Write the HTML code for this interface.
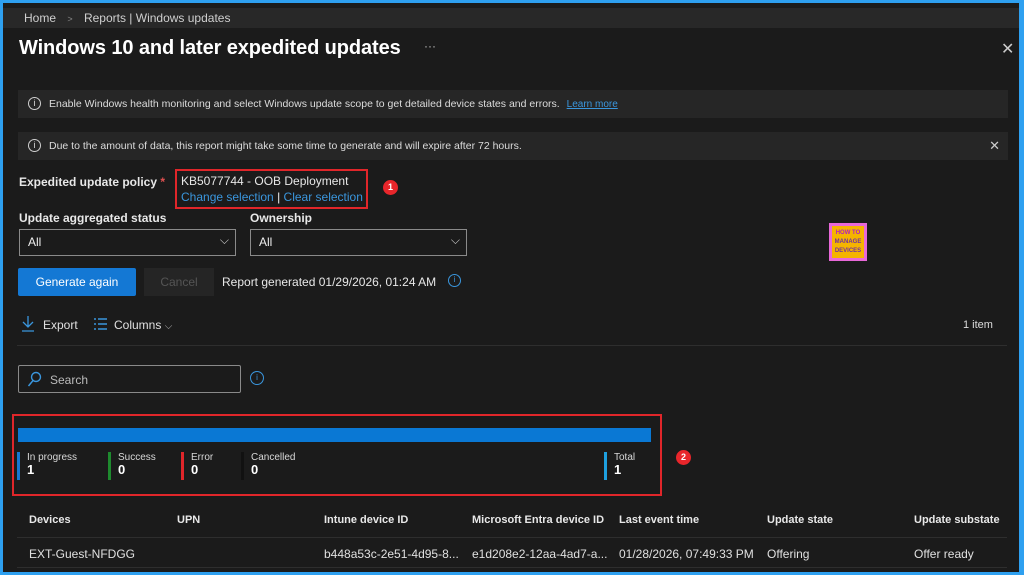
<!DOCTYPE html>
<html><head><style>
*{margin:0;padding:0;box-sizing:border-box}
body{width:1024px;height:575px;background:#2ea0f0;font-family:"Liberation Sans",sans-serif;color:#e6e6e6;overflow:hidden;position:relative}
#f{position:absolute;left:3px;top:3px;width:1016px;height:569px;background:#1b1b1b;overflow:hidden}
.a{position:absolute;white-space:nowrap}
.bar{position:absolute;left:15px;width:990px;height:28px;background:#262626;font-size:10.5px;color:#dcdcdc;line-height:28px;padding-left:31px}
.ic{position:absolute;left:10px;top:7px;width:13px;height:13px;border:1px solid #cfcfcf;border-radius:50%;font-size:9px;line-height:11px;text-align:center}
.sel{position:absolute;height:27px;border:1px solid #8a8a8a;background:#1b1b1b;font-size:12px;line-height:25px;padding-left:8px;color:#eee}
.lbl{font-size:12px;font-weight:bold;color:#e8e8e8}
.stat{position:absolute;top:449px;height:28px;border-left:3px solid;padding-left:7px;font-size:10px;line-height:12px;color:#d8d8d8}
.stat b{display:block;font-size:13px;color:#fff}
.th{position:absolute;top:511px;font-size:11px;font-weight:bold;color:#e8e8e8}
.td{position:absolute;top:544px;font-size:12px;color:#e0e0e0}
.badge{position:absolute;width:15px;height:15px;border-radius:50%;background:#e8262b;color:#fff;font-size:9px;font-weight:bold;text-align:center;line-height:15px}
</style></head><body><div id="f">
<div class="a" style="left:0;top:5px;width:1016px;height:20px;background:#282828"></div>
<div class="a" style="left:21px;top:8px;font-size:12px;color:#cfcfcf">Home <span style="color:#888;font-size:9px;margin:0 8px">&gt;</span> Reports | Windows updates</div>
<div class="a" style="left:16px;top:34px;font-size:20px;font-weight:bold;color:#fff;letter-spacing:-0.1px">Windows 10 and later expedited updates</div>
<div class="a" style="left:421px;top:36px;font-size:12px;color:#bbb">···</div>
<div class="a" style="left:998px;top:36px;font-size:16px;color:#ccc">✕</div>
<div class="bar" style="top:87px"><span class="ic">i</span>Enable Windows health monitoring and select Windows update scope to get detailed device states and errors. <span style="color:#3a96dd;text-decoration:underline;margin-left:4px;font-size:10px">Learn more</span></div>
<div class="bar" style="top:129px"><span class="ic">i</span>Due to the amount of data, this report might take some time to generate and will expire after 72 hours.<span style="position:absolute;right:8px;top:0;font-size:13px;color:#ccc">✕</span></div>
<div class="a lbl" style="left:16px;top:172px">Expedited update policy <span style="color:#e05050">*</span></div>
<div class="a" style="left:172px;top:166px;width:193px;height:40px;border:2px solid #e0262a"></div>
<div class="a" style="left:178px;top:171px;font-size:12px;color:#e8e8e8">KB5077744 - OOB Deployment</div>
<div class="a" style="left:178px;top:187px;font-size:12px;color:#3a96dd">Change selection <span style="color:#eee">|</span> Clear selection</div>
<div class="badge" style="left:380px;top:177px">1</div>
<div class="a lbl" style="left:16px;top:208px">Update aggregated status</div>
<div class="a lbl" style="left:247px;top:208px">Ownership</div>
<div class="sel" style="left:16px;top:226px;width:217px">All<span style="position:absolute;right:6px;top:-2px;color:#ccc">⌵</span></div>
<div class="sel" style="left:247px;top:226px;width:217px">All<span style="position:absolute;right:6px;top:-2px;color:#ccc">⌵</span></div>
<div class="a" style="left:826px;top:220px;width:38px;height:38px;background:#e868d8;padding:3px"><div style="width:32px;height:32px;background:#f5b400;font-size:6px;font-weight:bold;color:#b020c0;text-align:center;line-height:9px;padding-top:3px">HOW TO<br><span style="color:#7030a0">MANAGE<br>DEVICES</span></div></div>
<div class="a" style="left:15px;top:265px;width:118px;height:28px;background:#1478d4;border-radius:2px;font-size:12px;color:#fff;text-align:center;line-height:28px">Generate again</div>
<div class="a" style="left:141px;top:265px;width:70px;height:28px;background:#252525;font-size:12px;color:#555;text-align:center;line-height:28px">Cancel</div>
<div class="a" style="left:219px;top:272px;font-size:12px;color:#e8e8e8">Report generated 01/29/2026, 01:24 AM</div>
<div class="a" style="left:445px;top:271px;width:13px;height:13px;border:1.5px solid #3a96dd;border-radius:50%;color:#3a96dd;font-size:8px;text-align:center;line-height:10px">i</div>
<svg class="a" style="left:18px;top:312px" width="14" height="18" viewBox="0 0 14 18"><path d="M7 1V12M2 7l5 5 5-5M1 16h12" stroke="#3a96dd" stroke-width="1.3" fill="none"/></svg>
<div class="a" style="left:40px;top:315px;font-size:12px;color:#e0e0e0">Export</div>
<svg class="a" style="left:90px;top:314px" width="15" height="14" viewBox="0 0 15 14"><path d="M1 2h2M1 7h2M1 12h2M5 2h9M5 7h9M5 12h9" stroke="#3a96dd" stroke-width="1.4" fill="none"/></svg>
<div class="a" style="left:111px;top:315px;font-size:12px;color:#e0e0e0">Columns <span style="color:#aaa;font-size:10px">⌵</span></div>
<div class="a" style="left:960px;top:316px;font-size:11px;color:#ddd">1 item</div>
<div class="a" style="left:14px;top:342px;width:990px;height:1px;background:#2e2e2e"></div>
<div class="a" style="left:15px;top:362px;width:223px;height:28px;border:1px solid #8a8a8a;border-radius:2px"></div>
<svg class="a" style="left:24px;top:368px" width="15" height="16" viewBox="0 0 15 16"><circle cx="9" cy="6" r="4.5" stroke="#3a96dd" stroke-width="1.4" fill="none"/><path d="M6 9.5L1.5 15" stroke="#3a96dd" stroke-width="1.5"/></svg>
<div class="a" style="left:47px;top:370px;font-size:12px;color:#bbb">Search</div>
<div class="a" style="left:247px;top:368px;width:14px;height:14px;border:1.5px solid #3a96dd;border-radius:50%;color:#3a96dd;font-size:8px;text-align:center;line-height:11px">i</div>
<div class="a" style="left:9px;top:411px;width:650px;height:82px;border:2px solid #e0262a"></div>
<div class="a" style="left:15px;top:425px;width:633px;height:14px;background:#0a78d4"></div>
<div class="stat" style="left:14px;border-color:#1478d4">In progress<b>1</b></div>
<div class="stat" style="left:105px;border-color:#1e8a2e">Success<b>0</b></div>
<div class="stat" style="left:178px;border-color:#e0262a">Error<b>0</b></div>
<div class="stat" style="left:238px;border-color:#111">Cancelled<b>0</b></div>
<div class="stat" style="left:601px;border-color:#1ea0e0">Total<b>1</b></div>
<div class="badge" style="left:673px;top:447px">2</div>
<div class="th" style="left:26px">Devices</div>
<div class="th" style="left:174px">UPN</div>
<div class="th" style="left:321px">Intune device ID</div>
<div class="th" style="left:469px">Microsoft Entra device ID</div>
<div class="th" style="left:616px">Last event time</div>
<div class="th" style="left:764px">Update state</div>
<div class="th" style="left:911px">Update substate</div>
<div class="a" style="left:14px;top:534px;width:990px;height:1px;background:#2e2e2e"></div>
<div class="td" style="left:26px">EXT-Guest-NFDGG</div>
<div class="td" style="left:321px">b448a53c-2e51-4d95-8...</div>
<div class="td" style="left:469px">e1d208e2-12aa-4ad7-a...</div>
<div class="td" style="left:616px">01/28/2026, 07:49:33 PM</div>
<div class="td" style="left:764px">Offering</div>
<div class="td" style="left:911px">Offer ready</div>
<div class="a" style="left:14px;top:564px;width:990px;height:1px;background:#2e2e2e"></div>
</div></body></html>
